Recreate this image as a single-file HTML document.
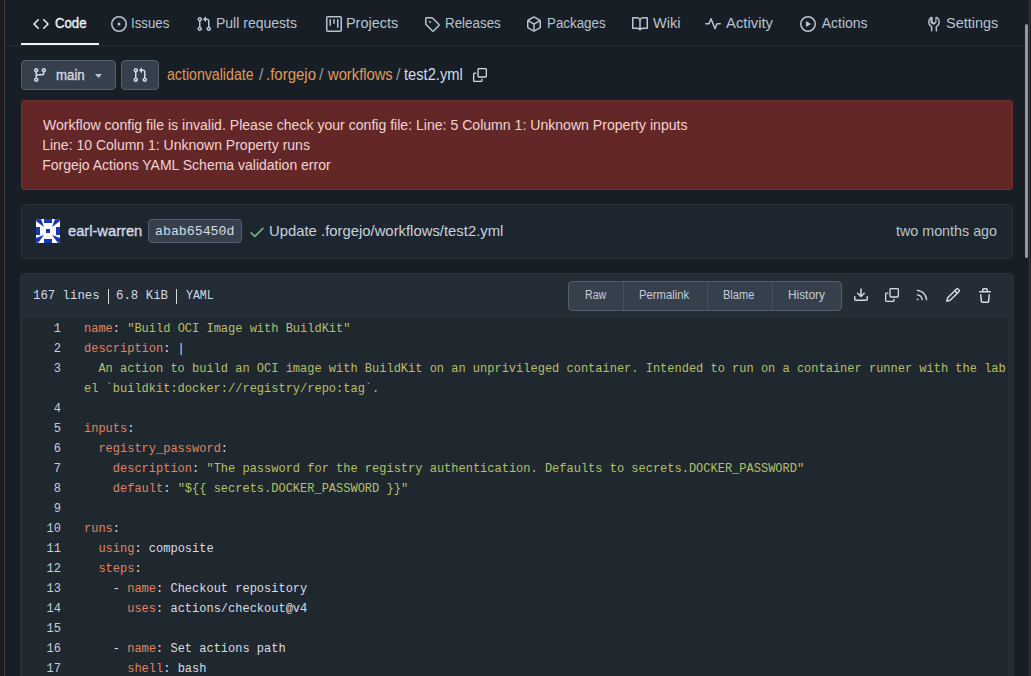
<!DOCTYPE html>
<html><head><meta charset="utf-8">
<style>
html,body{margin:0;padding:0;}
body{width:1031px;height:676px;overflow:hidden;background:#171e26;position:relative;font-family:"Liberation Sans",sans-serif;color:#c7d6ed;}
.a{position:absolute;white-space:nowrap;}
svg{position:absolute;fill:currentColor;}
.t{position:absolute;white-space:nowrap;font-size:14px;line-height:20px;transform-origin:0 0;}
.nav{color:#b8c4d2;}
.mono{font-family:"Liberation Mono",monospace;}
.btn{position:absolute;box-sizing:border-box;background:#36404c;border:1px solid #545f6c;border-radius:4px;}
.ln{position:absolute;left:22px;width:39px;text-align:right;color:#c7d0da;}
.lc{position:absolute;left:84px;white-space:pre;}
.code{font-family:"Liberation Mono",monospace;font-size:12px;line-height:20px;}
.k{color:#e2845d;}
.s{color:#b6c063;}
.p{color:#d8dee6;}
</style></head><body>
<!-- left strip -->
<div class="a" style="left:0;top:0;width:4px;height:676px;background:#1c1a1b"></div>
<div class="a" style="left:4px;top:0;width:1px;height:676px;background:#3b3f45"></div>

<!-- nav -->
<div class="a" style="left:5px;top:45px;width:1019px;height:1px;background:#232b34"></div>
<div class="a" style="left:21px;top:43px;width:78px;height:2px;background:#f2f4f7"></div>


<!-- row 2 -->
<div class="btn" style="left:21px;top:60px;width:95px;height:30px"></div>
<div class="btn" style="left:121px;top:60px;width:38px;height:30px"></div>

<!-- error -->
<div class="a" style="left:21px;top:100px;width:992px;height:90px;box-sizing:border-box;background:#642727;border:1px solid #6f3131;border-radius:3px"></div>

<!-- commit -->
<div class="a" style="left:21px;top:204px;width:992px;height:55px;box-sizing:border-box;background:#1d262e;border:1px solid #29323b;border-radius:4px"></div>
<div class="btn" style="left:148px;top:219px;width:94px;height:24px"></div>

<!-- file box -->
<div class="a" style="left:20px;top:273px;width:994px;height:420px;box-sizing:border-box;background:#232b34;border:1px solid #28313a;border-radius:4px"></div>
<div class="a" style="left:21px;top:274px;width:992px;height:44px;background:#242c35;border-radius:3px 3px 0 0"></div>
<div class="a" style="left:23px;top:318px;width:985px;height:400px;background:#1f272f"></div>
<div class="a" style="left:108px;top:289px;width:1px;height:15px;background:#d2dae3"></div>
<div class="a" style="left:176px;top:289px;width:1px;height:15px;background:#d2dae3"></div>

<div class="btn" style="left:568px;top:281px;width:274px;height:30px"></div>
<div class="a" style="left:623px;top:282px;width:1px;height:28px;background:#445161"></div>
<div class="a" style="left:707px;top:282px;width:1px;height:28px;background:#445161"></div>
<div class="a" style="left:772px;top:282px;width:1px;height:28px;background:#445161"></div>

<div class="t" style="left:54.70px;top:13px;font-size:14px;-webkit-text-stroke:0.35px currentColor;color:#eef2f6;transform:scaleX(0.9412);">Code</div>
<div class="t" style="left:131.05px;top:13px;font-size:14px;color:#b9c3cf;transform:scaleX(0.9487);">Issues</div>
<div class="t" style="left:216.00px;top:13px;font-size:14px;color:#b9c3cf;">Pull requests</div>
<div class="t" style="left:345.97px;top:13px;font-size:14px;color:#b9c3cf;transform:scaleX(1.0306);">Projects</div>
<div class="t" style="left:444.54px;top:13px;font-size:14px;color:#b9c3cf;transform:scaleX(0.9561);">Releases</div>
<div class="t" style="left:546.85px;top:13px;font-size:14px;color:#b9c3cf;transform:scaleX(0.9533);">Packages</div>
<div class="t" style="left:652.60px;top:13px;font-size:14px;color:#b9c3cf;transform:scaleX(1.0423);">Wiki</div>
<div class="t" style="left:726.40px;top:13px;font-size:14px;color:#b9c3cf;transform:scaleX(1.0591);">Activity</div>
<div class="t" style="left:821.70px;top:13px;font-size:14px;color:#b9c3cf;">Actions</div>
<div class="t" style="left:946.37px;top:13px;font-size:14px;color:#b9c3cf;transform:scaleX(1.0327);">Settings</div>
<div class="t" style="left:55.50px;top:65px;font-size:14px;-webkit-text-stroke:0.35px currentColor;color:#d3dbe4;transform:scaleX(0.9467);">main</div>
<div class="t" style="left:167.30px;top:65px;font-size:16px;color:#e09a55;transform:scaleX(0.8847);">actionvalidate</div>
<div class="t" style="left:259.00px;top:65px;font-size:16px;color:#8f9aa7;">/</div>
<div class="t" style="left:266.06px;top:65px;font-size:16px;color:#e09a55;transform:scaleX(0.9365);">.forgejo</div>
<div class="t" style="left:319.00px;top:65px;font-size:16px;color:#8f9aa7;">/</div>
<div class="t" style="left:328.00px;top:65px;font-size:16px;color:#e09a55;transform:scaleX(0.9214);">workflows</div>
<div class="t" style="left:396.00px;top:65px;font-size:16px;color:#8f9aa7;">/</div>
<div class="t" style="left:404.00px;top:65px;font-size:16px;color:#d3dbe4;transform:scaleX(0.9175);">test2.yml</div>
<div class="t" style="left:43.20px;top:115px;font-size:14px;color:#f2d3d3;transform:scaleX(1.0056);">Workflow config file is invalid. Please check your config file: Line: 5 Column 1: Unknown Property inputs</div>
<div class="t" style="left:42.20px;top:135px;font-size:14px;color:#f2d3d3;">Line: 10 Column 1: Unknown Property runs</div>
<div class="t" style="left:42.20px;top:155px;font-size:14px;color:#f2d3d3;">Forgejo Actions YAML Schema validation error</div>
<div class="t" style="left:67.50px;top:221px;font-size:15px;-webkit-text-stroke:0.35px currentColor;color:#d3dbe4;transform:scaleX(0.9789);">earl-warren</div>
<div class="t" style="left:155.48px;top:222px;font-size:13px;font-family:'Liberation Mono',monospace;color:#d3dbe4;transform:scaleX(1.0184);">abab65450d</div>
<div class="t" style="left:269.41px;top:221px;font-size:15px;color:#c8d1dc;transform:scaleX(0.9898);">Update .forgejo/workflows/test2.yml</div>
<div class="t" style="left:896.40px;top:221px;font-size:15px;color:#b9c3cf;transform:scaleX(0.9538);">two months ago</div>
<div class="t" style="left:33.05px;top:286px;font-size:13px;font-family:'Liberation Mono',monospace;color:#d3dbe4;transform:scaleX(0.9493);">167 lines</div>
<div class="t" style="left:116.05px;top:286px;font-size:13px;font-family:'Liberation Mono',monospace;color:#d3dbe4;transform:scaleX(0.9528);">6.8 KiB</div>
<div class="t" style="left:186.00px;top:286px;font-size:13px;font-family:'Liberation Mono',monospace;color:#d3dbe4;transform:scaleX(0.8871);">YAML</div>
<div class="t" style="left:584.71px;top:285px;font-size:12px;color:#c3ccd7;transform:scaleX(0.8870);">Raw</div>
<div class="t" style="left:639.46px;top:285px;font-size:12px;color:#c3ccd7;transform:scaleX(0.9385);">Permalink</div>
<div class="t" style="left:722.68px;top:285px;font-size:12px;color:#c3ccd7;transform:scaleX(0.9212);">Blame</div>
<div class="t" style="left:787.51px;top:285px;font-size:12px;color:#c3ccd7;transform:scaleX(0.9861);">History</div>
<!-- code -->
<div class="a code" style="left:0;top:319px;width:1031px;">
<div class="ln" style="top:0">1</div><div class="lc" style="top:0"><span class="k">name</span><span class="p">: </span><span class="s">"Build OCI Image with BuildKit"</span></div>
<div class="ln" style="top:20px">2</div><div class="lc" style="top:20px"><span class="k">description</span><span class="p">: |</span></div>
<div class="ln" style="top:40px">3</div><div class="lc" style="top:40px"><span class="s">  An action to build an OCI image with BuildKit on an unprivileged container. Intended to run on a container runner with the lab</span></div>
<div class="lc" style="top:60px"><span class="s">el `buildkit:docker://registry/repo:tag`.</span></div>
<div class="ln" style="top:80px">4</div>
<div class="ln" style="top:100px">5</div><div class="lc" style="top:100px"><span class="k">inputs</span><span class="p">:</span></div>
<div class="ln" style="top:120px">6</div><div class="lc" style="top:120px"><span class="p">  </span><span class="k">registry_password</span><span class="p">:</span></div>
<div class="ln" style="top:140px">7</div><div class="lc" style="top:140px"><span class="p">    </span><span class="k">description</span><span class="p">: </span><span class="s">"The password for the registry authentication. Defaults to secrets.DOCKER_PASSWORD"</span></div>
<div class="ln" style="top:160px">8</div><div class="lc" style="top:160px"><span class="p">    </span><span class="k">default</span><span class="p">: </span><span class="s">"${{ secrets.DOCKER_PASSWORD }}"</span></div>
<div class="ln" style="top:180px">9</div>
<div class="ln" style="top:200px">10</div><div class="lc" style="top:200px"><span class="k">runs</span><span class="p">:</span></div>
<div class="ln" style="top:220px">11</div><div class="lc" style="top:220px"><span class="p">  </span><span class="k">using</span><span class="p">: composite</span></div>
<div class="ln" style="top:240px">12</div><div class="lc" style="top:240px"><span class="p">  </span><span class="k">steps</span><span class="p">:</span></div>
<div class="ln" style="top:260px">13</div><div class="lc" style="top:260px"><span class="p">    - </span><span class="k">name</span><span class="p">: Checkout repository</span></div>
<div class="ln" style="top:280px">14</div><div class="lc" style="top:280px"><span class="p">      </span><span class="k">uses</span><span class="p">: actions/checkout@v4</span></div>
<div class="ln" style="top:300px">15</div>
<div class="ln" style="top:320px">16</div><div class="lc" style="top:320px"><span class="p">    - </span><span class="k">name</span><span class="p">: Set actions path</span></div>
<div class="ln" style="top:340px">17</div><div class="lc" style="top:340px"><span class="p">      </span><span class="k">shell</span><span class="p">: bash</span></div>
</div>


<!-- nav icons -->
<svg style="left:33px;top:16px;color:#eef2f6" width="16" height="16" viewBox="0 0 16 16"><path d="m11.28 3.22 4.25 4.25a.75.75 0 0 1 0 1.06l-4.25 4.25a.749.749 0 0 1-1.275-.326.749.749 0 0 1 .215-.734L13.94 8l-3.72-3.72a.749.749 0 0 1 .326-1.275.749.749 0 0 1 .734.215Zm-6.56 0a.751.751 0 0 1 1.042.018.751.751 0 0 1 .018 1.042L2.06 8l3.72 3.72a.749.749 0 0 1-.326 1.275.749.749 0 0 1-.734-.215L.47 8.53a.75.75 0 0 1 0-1.06Z"/></svg>
<svg class="nav" style="left:111px;top:16px" width="16" height="16" viewBox="0 0 16 16"><path d="M8 9.5a1.5 1.5 0 1 0 0-3 1.5 1.5 0 0 0 0 3Z"/><path d="M8 0a8 8 0 1 1 0 16A8 8 0 0 1 8 0ZM1.5 8a6.5 6.5 0 1 0 13 0 6.5 6.5 0 0 0-13 0Z"/></svg>
<svg class="nav" style="left:196px;top:16px" width="16" height="16" viewBox="0 0 16 16"><path d="M1.5 3.25a2.25 2.25 0 1 1 3 2.122v5.256a2.251 2.251 0 1 1-1.5 0V5.372A2.25 2.25 0 0 1 1.5 3.25Zm5.677-.177L9.573.677A.25.25 0 0 1 10 .854V2.5h1A2.5 2.5 0 0 1 13.5 5v5.628a2.251 2.251 0 1 1-1.5 0V5a1 1 0 0 0-1-1h-1v1.646a.25.25 0 0 1-.427.177L7.177 3.427a.25.25 0 0 1 0-.354ZM3.75 2.5a.75.75 0 1 0 0 1.5.75.75 0 0 0 0-1.5Zm0 9.5a.75.75 0 1 0 0 1.5.75.75 0 0 0 0-1.5Zm8.25.75a.75.75 0 1 0 1.5 0 .75.75 0 0 0-1.5 0Z"/></svg>
<svg class="nav" style="left:326px;top:16px" width="16" height="16" viewBox="0 0 16 16"><path d="M1.75 0h12.5C15.216 0 16 .784 16 1.75v12.5A1.75 1.75 0 0 1 14.25 16H1.75A1.75 1.75 0 0 1 0 14.25V1.75C0 .784.784 0 1.75 0ZM1.5 1.75v12.5c0 .138.112.25.25.25h12.5a.25.25 0 0 0 .25-.25V1.75a.25.25 0 0 0-.25-.25H1.75a.25.25 0 0 0-.25.25ZM11.75 3a.75.75 0 0 1 .75.75v7.5a.75.75 0 0 1-1.5 0v-7.5a.75.75 0 0 1 .75-.75Zm-8.25.75a.75.75 0 0 1 1.5 0v5.5a.75.75 0 0 1-1.5 0ZM8 3a.75.75 0 0 1 .75.75v3.5a.75.75 0 0 1-1.5 0v-3.5A.75.75 0 0 1 8 3Z"/></svg>
<svg class="nav" style="left:424px;top:16px" width="16" height="16" viewBox="0 0 16 16"><path d="M1 7.775V2.75C1 1.784 1.784 1 2.75 1h5.025c.464 0 .91.184 1.238.513l6.25 6.25a1.75 1.75 0 0 1 0 2.474l-5.026 5.026a1.75 1.75 0 0 1-2.474 0l-6.25-6.25A1.752 1.752 0 0 1 1 7.775Zm1.5 0c0 .066.026.13.073.177l6.25 6.25a.25.25 0 0 0 .354 0l5.025-5.025a.25.25 0 0 0 0-.354l-6.25-6.25a.25.25 0 0 0-.177-.073H2.75a.25.25 0 0 0-.25.25ZM6 5a1 1 0 1 1 0 2 1 1 0 0 1 0-2Z"/></svg>
<svg class="nav" style="left:526px;top:16px" width="16" height="16" viewBox="0 0 16 16"><path d="m8.878.392 5.25 3.045c.54.314.872.89.872 1.514v6.098a1.75 1.75 0 0 1-.872 1.514l-5.25 3.045a1.75 1.75 0 0 1-1.756 0l-5.25-3.045A1.75 1.75 0 0 1 1 11.049V4.951c0-.624.332-1.201.872-1.514L7.122.392a1.75 1.75 0 0 1 1.756 0ZM7.875 1.69l-4.63 2.685L8 7.133l4.755-2.758-4.63-2.685a.248.248 0 0 0-.25 0ZM2.5 5.677v5.372c0 .09.047.171.125.216l4.625 2.683V8.432Zm6.25 8.271 4.625-2.683a.25.25 0 0 0 .125-.216V5.677L8.75 8.432Z"/></svg>
<svg class="nav" style="left:632px;top:16px" width="16" height="16" viewBox="0 0 16 16"><path d="M0 1.75A.75.75 0 0 1 .75 1h4.253c1.227 0 2.317.59 3 1.501A3.743 3.743 0 0 1 11.006 1h4.245a.75.75 0 0 1 .75.75v10.5a.75.75 0 0 1-.75.75h-4.507a2.25 2.25 0 0 0-1.591.659l-.622.621a.75.75 0 0 1-1.06 0l-.622-.621A2.25 2.25 0 0 0 5.258 13H.75a.75.75 0 0 1-.75-.75Zm7.251 10.324.004-5.073-.002-2.253A2.25 2.25 0 0 0 5.003 2.5H1.5v9h3.757a3.75 3.75 0 0 1 1.994.574ZM8.755 4.75l-.004 7.322a3.752 3.752 0 0 1 1.992-.572H14.5v-9h-3.495a2.25 2.25 0 0 0-2.25 2.25Z"/></svg>
<svg class="nav" style="left:705px;top:16px" width="16" height="16" viewBox="0 0 16 16"><path d="M6 2c.306 0 .582.187.696.471L10 10.731l1.304-3.26A.751.751 0 0 1 12 7h3.25a.75.75 0 0 1 0 1.5h-2.742l-1.812 4.528a.751.751 0 0 1-1.392 0L6 4.77 4.696 8.03A.75.75 0 0 1 4 8.5H.75a.75.75 0 0 1 0-1.5h2.742l1.812-4.529A.751.751 0 0 1 6 2Z"/></svg>
<svg class="nav" style="left:800px;top:16px" width="16" height="16" viewBox="0 0 16 16"><path d="M8 0a8 8 0 1 1 0 16A8 8 0 0 1 8 0ZM1.5 8a6.5 6.5 0 1 0 13 0 6.5 6.5 0 0 0-13 0Zm4.879-2.773 4.264 2.559a.25.25 0 0 1 0 .428l-4.264 2.559A.25.25 0 0 1 6 10.559V5.442a.25.25 0 0 1 .379-.215Z"/></svg>
<svg class="nav" style="left:926px;top:16px" width="16" height="16" viewBox="0 0 16 16"><path d="M5.433 2.304A4.492 4.492 0 0 0 3.5 6c0 1.598.832 3.002 2.09 3.802.518.328.929.923.902 1.64v.008l-.164 3.337a.75.75 0 1 1-1.498-.073l.163-3.33c.002-.085-.05-.216-.207-.316A5.996 5.996 0 0 1 2 6a5.993 5.993 0 0 1 2.567-4.92 1.482 1.482 0 0 1 .976-.276c.604.062 1.123.513 1.123 1.202v3.52c0 .079.032.152.09.203L8 6.723l1.244-.994a.273.273 0 0 0 .09-.203v-3.52c0-.69.519-1.14 1.123-1.202a1.482 1.482 0 0 1 .976.276A5.993 5.993 0 0 1 14 6a5.996 5.996 0 0 1-2.786 5.068c-.157.1-.209.23-.207.315l.163 3.33a.752.752 0 0 1-1.094.714.75.75 0 0 1-.404-.64l-.164-3.338v-.008c-.027-.717.384-1.312.902-1.64A4.495 4.495 0 0 0 12.5 6a4.492 4.492 0 0 0-1.933-3.696c-.024.017-.067.067-.067.144v3.536a1.75 1.75 0 0 1-.658 1.372l-1.245.994a1.754 1.754 0 0 1-2.184 0l-1.245-.994A1.75 1.75 0 0 1 4.5 5.984V2.448c0-.077-.043-.127-.067-.144Z"/></svg>
<!-- row2 icons -->
<svg style="left:32px;top:67px;color:#d2dae3" width="16" height="16" viewBox="0 0 16 16"><path d="M9.5 3.25a2.25 2.25 0 1 1 3 2.122V6A2.5 2.5 0 0 1 10 8.5H6a1 1 0 0 0-1 1v1.128a2.251 2.251 0 1 1-1.5 0V5.372a2.25 2.25 0 1 1 1.5 0v1.836A2.493 2.493 0 0 1 6 7h4a1 1 0 0 0 1-1v-.628A2.25 2.25 0 0 1 9.5 3.25Zm-6 0a.75.75 0 1 0 1.5 0 .75.75 0 0 0-1.5 0Zm8.25-.75a.75.75 0 1 0 0 1.5.75.75 0 0 0 0-1.5ZM4.25 12a.75.75 0 1 0 0 1.5.75.75 0 0 0 0-1.5Z"/></svg>
<svg style="left:95px;top:74px;color:#b8c4d2" width="7" height="4" viewBox="0 0 7 4"><path d="M0 0h7L3.5 4Z"/></svg>
<svg style="left:132px;top:67px;color:#d2dae3" width="16" height="16" viewBox="0 0 16 16"><path d="M1.5 3.25a2.25 2.25 0 1 1 3 2.122v5.256a2.251 2.251 0 1 1-1.5 0V5.372A2.25 2.25 0 0 1 1.5 3.25Zm5.677-.177L9.573.677A.25.25 0 0 1 10 .854V2.5h1A2.5 2.5 0 0 1 13.5 5v5.628a2.251 2.251 0 1 1-1.5 0V5a1 1 0 0 0-1-1h-1v1.646a.25.25 0 0 1-.427.177L7.177 3.427a.25.25 0 0 1 0-.354ZM3.750 2.5a.75.75 0 1 0 0 1.5.75.75 0 0 0 0-1.5Zm0 9.5a.75.75 0 1 0 0 1.5.75.75 0 0 0 0-1.5Zm8.25.75a.75.75 0 1 0 1.5 0 .75.75 0 0 0-1.5 0Z"/></svg>
<svg style="left:473px;top:68px;color:#d2dae3" width="14" height="14" viewBox="0 0 16 16"><path d="M0 6.75C0 5.784.784 5 1.75 5h1.5a.75.75 0 0 1 0 1.5h-1.5a.25.25 0 0 0-.25.25v7.5c0 .138.112.25.25.25h7.5a.25.25 0 0 0 .25-.25v-1.5a.75.75 0 0 1 1.5 0v1.5A1.75 1.75 0 0 1 9.25 16h-7.5A1.75 1.75 0 0 1 0 14.25Z"/><path d="M5 1.75C5 .784 5.784 0 6.75 0h7.5C15.216 0 16 .784 16 1.75v7.5A1.75 1.75 0 0 1 14.25 11h-7.5A1.75 1.75 0 0 1 5 9.25Zm1.75-.25a.25.25 0 0 0-.25.25v7.5c0 .138.112.25.25.25h7.5a.25.25 0 0 0 .25-.25v-7.5a.25.25 0 0 0-.25-.25Z"/></svg>
<!-- commit icons -->
<svg style="left:247.5px;top:223px;color:#66bb7a" width="18" height="18" viewBox="0 0 16 16"><path d="M13.78 4.22a.75.75 0 0 1 0 1.06l-7.25 7.25a.75.75 0 0 1-1.06 0L2.22 9.28a.751.751 0 0 1 .018-1.042.751.751 0 0 1 1.042-.018L6 10.94l6.72-6.72a.75.75 0 0 1 1.06 0Z"/></svg>
<!-- file header icons -->
<svg style="left:853px;top:287px;color:#d2dae3" width="16" height="16" viewBox="0 0 16 16"><path d="M2.75 14A1.75 1.75 0 0 1 1 12.25v-2.5a.75.75 0 0 1 1.5 0v2.5c0 .138.112.25.25.25h10.5a.25.25 0 0 0 .25-.25v-2.5a.75.75 0 0 1 1.5 0v2.5A1.75 1.75 0 0 1 13.25 14Z"/><path d="M7.25 7.689V2a.75.75 0 0 1 1.5 0v5.689l1.970-1.969a.749.749 0 1 1 1.060 1.060l-3.25 3.25a.749.749 0 0 1-1.060 0L4.220 6.780a.749.749 0 1 1 1.060-1.060l1.970 1.969Z"/></svg>
<svg style="left:885px;top:288px;color:#d2dae3" width="14" height="14" viewBox="0 0 16 16"><path d="M0 6.75C0 5.784.784 5 1.75 5h1.5a.75.75 0 0 1 0 1.5h-1.5a.25.25 0 0 0-.25.25v7.5c0 .138.112.25.25.25h7.5a.25.25 0 0 0 .25-.25v-1.5a.75.75 0 0 1 1.5 0v1.5A1.75 1.75 0 0 1 9.25 16h-7.5A1.75 1.75 0 0 1 0 14.25Z"/><path d="M5 1.75C5 .784 5.784 0 6.75 0h7.5C15.216 0 16 .784 16 1.75v7.5A1.75 1.75 0 0 1 14.25 11h-7.5A1.75 1.75 0 0 1 5 9.25Zm1.75-.25a.25.25 0 0 0-.25.25v7.5c0 .138.112.25.25.25h7.5a.25.25 0 0 0 .25-.25v-7.5a.25.25 0 0 0-.25-.25Z"/></svg>
<svg style="left:915px;top:288px;color:#d2dae3" width="14" height="14" viewBox="0 0 16 16"><path d="M2.002 2.725a.75.75 0 0 1 .797-.699C8.79 2.42 13.58 7.21 13.974 13.201a.75.75 0 0 1-1.497.098 10.502 10.502 0 0 0-9.776-9.776.747.747 0 0 1-.7-.798ZM2.840 7.050h-.002a7.002 7.002 0 0 1 6.113 6.111.75.75 0 0 1-1.490.178 5.503 5.503 0 0 0-4.800-4.800.75.75 0 0 1 .179-1.489ZM2 13a1 1 0 1 1 2 0 1 1 0 0 1-2 0Z"/></svg>
<svg style="left:945px;top:287px;color:#d2dae3" width="16" height="16" viewBox="0 0 16 16"><path d="M11.013 1.427a1.75 1.75 0 0 1 2.474 0l1.086 1.086a1.75 1.75 0 0 1 0 2.474l-8.61 8.61c-.21.21-.47.364-.756.445l-3.251.93a.75.75 0 0 1-.927-.928l.929-3.25c.081-.286.235-.547.445-.758l8.61-8.61Zm.176 4.823L9.75 4.81l-6.286 6.287a.253.253 0 0 0-.064.108l-.558 1.953 1.953-.558a.253.253 0 0 0 .108-.064Zm1.238-3.763a.25.25 0 0 0-.354 0L10.811 3.75l1.439 1.44 1.263-1.263a.25.25 0 0 0 0-.354Z"/></svg>
<svg style="left:977px;top:288px;color:#d2dae3" width="16" height="16" viewBox="0 0 16 16"><path d="M11 1.75V3h2.25a.75.75 0 0 1 0 1.5H2.75a.75.75 0 0 1 0-1.5H5V1.75C5 .784 5.784 0 6.75 0h2.5C10.216 0 11 .784 11 1.75ZM4.496 6.675l.66 6.6a.25.25 0 0 0 .249.225h5.19a.25.25 0 0 0 .249-.225l.66-6.6a.75.75 0 0 1 1.492.149l-.66 6.6A1.748 1.748 0 0 1 10.595 15h-5.19a1.75 1.75 0 0 1-1.741-1.575l-.66-6.6a.75.75 0 1 1 1.492-.15ZM6.5 1.75V3h3V1.75a.25.25 0 0 0-.25-.25h-2.5a.25.25 0 0 0-.25.25Z"/></svg>
<!-- avatar -->
<svg style="left:36px;top:219px" width="24" height="24" viewBox="0 0 24 24"><defs><clipPath id="avc"><rect width="24" height="24" rx="2.5"/></clipPath></defs><g clip-path="url(#avc)"><rect width="24" height="24" fill="#ffffff"/>
<g fill="#1735b6"><rect x="8" y="0" width="8" height="4"/><rect x="8" y="20" width="8" height="4"/><rect x="0" y="8" width="4" height="8"/><rect x="20" y="8" width="4" height="8"/><rect x="10" y="10" width="4" height="4"/>
<path d="M0 2V0h5l3 8Z M24 2V0h-5l-3 8Z M0 19v5h2l6-8Z M24 19v5h-2l-6-8Z"/></g></g></svg>

<!-- scrollbar -->
<div class="a" style="left:1025px;top:0;width:2px;height:676px;background:#1a1d23"></div>
<div class="a" style="left:1027px;top:0;width:2px;height:676px;background:#1e1f22"></div>
<div class="a" style="left:1029px;top:0;width:1px;height:676px;background:#37383a"></div>
<div class="a" style="left:1030px;top:0;width:1px;height:676px;background:#1c1c1c"></div>
<div class="a" style="left:1025px;top:24px;width:3px;height:234px;background:#92989c;border-radius:1.5px"></div>
</body></html>
